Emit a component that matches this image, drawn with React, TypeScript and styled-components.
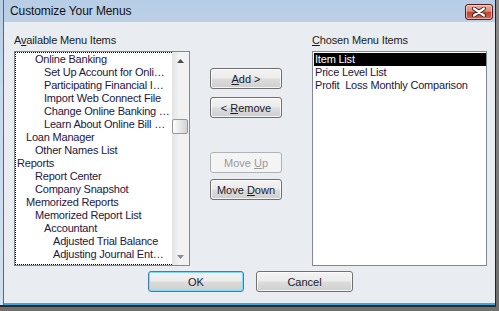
import React from "react";
import styled, { createGlobalStyle, css } from "styled-components";

const Global = createGlobalStyle`
  html, body { margin: 0; padding: 0; }
  body {
    width: 499px;
    height: 311px;
    overflow: hidden;
    background: linear-gradient(180deg, #8c8c8c, #6f6f6f);
    font-family: "Liberation Sans", Arial, sans-serif;
  }
`;

const Window = styled.div`
  box-sizing: border-box;
  width: 496px;
  height: 307px;
  padding: 0 0 0 3px;
  background: linear-gradient(180deg, #b7cde5 0%, #c8d9ec 30%, #d2e1f1 100%);
  border-right: 1px solid #232323;
  border-bottom: 2px solid #2a2a2a;
  display: flex;
`;

const Inner = styled.div`
  flex: 1;
  display: flex;
  flex-direction: column;
  border-left: 1px solid #56677a;
`;

const TitleBar = styled.div`
  height: 22px;
  display: flex;
  align-items: center;
  justify-content: space-between;
  padding: 0 2px 0 6px;
`;

const Title = styled.span`
  font-size: 12px;
  color: #111;
  letter-spacing: -0.1px;
`;

const CloseButton = styled.div`
  box-sizing: border-box;
  width: 28px;
  height: 16px;
  margin-top: 1px;
  border: 1px solid #5a1d1d;
  border-radius: 3px;
  background: linear-gradient(180deg, #eab3a4 0%, #d98a77 45%, #c2442f 52%, #cf6a52 100%);
  box-shadow: inset 0 0 0 1px rgba(255, 220, 210, 0.6);
  display: flex;
  align-items: center;
  justify-content: center;
`;

const Client = styled.div`
  flex: 1;
  display: flex;
  flex-direction: column;
  background: #e9edf1;
  padding: 12px 7px 0 10px;
  border-bottom: 2px solid #3ea6d8;
`;

const Columns = styled.div`
  display: flex;
  align-items: flex-start;
`;

const Pane = styled.div<{ $w: number; $ml?: number }>`
  width: ${(p) => p.$w}px;
  margin-left: ${(p) => p.$ml ?? 0}px;
  display: flex;
  flex-direction: column;
`;

const Label = styled.div`
  height: 13px;
  line-height: 13px;
  font-size: 11px;
  color: #1b1b1b;
  margin-bottom: 4px;
  white-space: pre;
  letter-spacing: -0.15px;
`;

const Mn = styled.span`
  text-decoration: underline;
  text-underline-offset: 1px;
`;

const ListBox = styled.div`
  box-sizing: border-box;
  height: 215px;
  border: 1px solid #828790;
  background: #fff;
  display: flex;
`;

const ListContent = styled.div<{ $focus?: boolean }>`
  flex: 1;
  overflow: hidden;
  border: 1px ${(p) => (p.$focus ? "dotted #000" : "solid #fff")};
  border-right: none;
`;

const Row = styled.div<{ $level?: number; $selected?: boolean }>`
  height: 13px;
  line-height: 13px;
  font-size: 11px;
  letter-spacing: -0.2px;
  white-space: pre;
  color: #22163f;
  padding-left: ${(p) => 1 + (p.$level ?? 0) * 9}px;
  ${(p) =>
    p.$selected &&
    css`
      background: #000;
      color: #fff;
    `}
`;

const ScrollBar = styled.div`
  width: 17px;
  display: flex;
  flex-direction: column;
  background: linear-gradient(90deg, #e3e3e3 0%, #f2f2f2 40%, #f2f2f2 100%);
`;

const ArrowBox = styled.div`
  height: 17px;
  display: flex;
  align-items: center;
  justify-content: center;
`;

const Track = styled.div`
  flex: 1;
`;

const Thumb = styled.div`
  box-sizing: border-box;
  width: 16px;
  height: 15px;
  border: 1px solid #979797;
  border-radius: 2px;
  background: linear-gradient(90deg, #fdfdfd 0%, #e8e8e8 50%, #d3d3d3 100%);
`;

const ButtonColumn = styled.div`
  width: 72px;
  margin-left: 20px;
  padding-top: 34px;
  display: flex;
  flex-direction: column;
`;

const Btn = styled.button<{ $w?: number; $mt?: number; $default?: boolean }>`
  box-sizing: border-box;
  width: ${(p) => p.$w ?? 72}px;
  height: 21px;
  margin: ${(p) => p.$mt ?? 0}px 0 0 0;
  padding: 0;
  font-family: "Liberation Sans", Arial, sans-serif;
  font-size: 11px;
  color: #1a1a2a;
  border: 1px solid #707070;
  border-radius: 3px;
  background: linear-gradient(180deg, #f3f3f3 0%, #ebebeb 48%, #dcdcdc 52%, #cfcfcf 100%);
  box-shadow: inset 0 0 0 1px rgba(255, 255, 255, 0.75);
  white-space: pre;
  &:disabled {
    border-color: #adb2b5;
    background: #f4f4f4;
    color: #9a9a9a;
    box-shadow: none;
  }
  ${(p) =>
    p.$default &&
    css`
      border-color: #3c7fb1;
      box-shadow: inset 0 0 0 1px #7fd8f7;
    `}
`;

const Footer = styled.div`
  display: flex;
  justify-content: center;
  gap: 12px;
  margin-top: 5px;
  padding-right: 1px;
`;

const available: [string, number][] = [
  ["Online Banking", 2],
  ["Set Up Account for Onli…", 3],
  ["Participating Financial I…", 3],
  ["Import Web Connect File", 3],
  ["Change Online Banking …", 3],
  ["Learn About Online Bill …", 3],
  ["Loan Manager", 1],
  ["Other Names List", 2],
  ["Reports", 0],
  ["Report Center", 2],
  ["Company Snapshot", 2],
  ["Memorized Reports", 1],
  ["Memorized Report List", 2],
  ["Accountant", 3],
  ["Adjusted Trial Balance", 4],
  ["Adjusting Journal Ent…", 4],
];

const chosen = ["Item List", "Price Level List", "Profit  Loss Monthly Comparison"];

const Arrow = ({ up, color }: { up?: boolean; color: string }) => (
  <svg width="7" height="4" viewBox="0 0 7 4">
    <path d={up ? "M0 4 L3.5 0 L7 4 Z" : "M0 0 L3.5 4 L7 0 Z"} fill={color} />
  </svg>
);

export default function App() {
  return (
    <>
      <Global />
      <Window>
        <Inner>
          <TitleBar>
            <Title>Customize Your Menus</Title>
            <CloseButton>
              <svg width="16" height="10" viewBox="0 0 16 10">
                <path d="M3 1.5 L13 8.5 M13 1.5 L3 8.5" stroke="#3b2020" strokeWidth="4" strokeLinecap="round" />
                <path d="M3 1.5 L13 8.5 M13 1.5 L3 8.5" stroke="#ffffff" strokeWidth="2.2" strokeLinecap="round" />
              </svg>
            </CloseButton>
          </TitleBar>
          <Client>
            <Columns>
              <Pane $w={176}>
                <Label>
                  A<Mn>v</Mn>ailable Menu Items
                </Label>
                <ListBox>
                  <ListContent $focus>
                    {available.map(([t, l]) => (
                      <Row key={t} $level={l}>
                        {t}
                      </Row>
                    ))}
                  </ListContent>
                  <ScrollBar>
                    <ArrowBox>
                      <Arrow up color="#4a4a4a" />
                    </ArrowBox>
                    <Track>
                      <Thumb style={{ marginTop: 50 }} />
                    </Track>
                    <ArrowBox>
                      <Arrow color="#8a8a8a" />
                    </ArrowBox>
                  </ScrollBar>
                </ListBox>
              </Pane>
              <ButtonColumn>
                <Btn>
                  <Mn>A</Mn>dd &gt;
                </Btn>
                <Btn $mt={8}>
                  &lt; <Mn>R</Mn>emove
                </Btn>
                <Btn $mt={34} disabled>
                  Move <Mn>U</Mn>p
                </Btn>
                <Btn $mt={6}>
                  Move <Mn>D</Mn>own
                </Btn>
              </ButtonColumn>
              <Pane $w={175} $ml={30}>
                <Label>
                  <Mn>C</Mn>hosen Menu Items
                </Label>
                <ListBox>
                  <ListContent>
                    {chosen.map((t, i) => (
                      <Row key={t} $selected={i === 0}>
                        {t}
                      </Row>
                    ))}
                  </ListContent>
                </ListBox>
              </Pane>
            </Columns>
            <Footer>
              <Btn $w={96} $default>
                OK
              </Btn>
              <Btn $w={97}>Cancel</Btn>
            </Footer>
          </Client>
        </Inner>
      </Window>
    </>
  );
}
